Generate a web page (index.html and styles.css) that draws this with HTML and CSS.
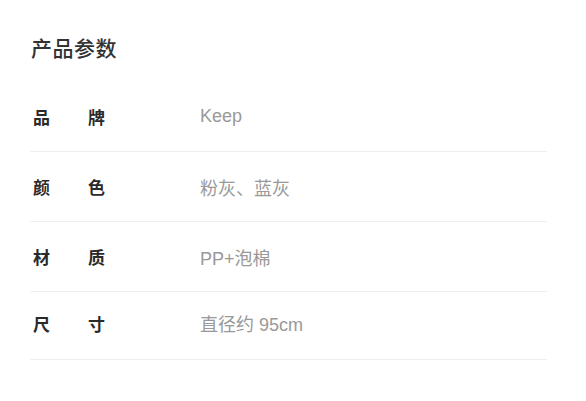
FILE: index.html
```html
<!DOCTYPE html>
<html lang="zh-CN">
<head>
    <meta charset="UTF-8">
    <meta name="viewport" content="width=device-width, initial-scale=1.0">
    <title>产品参数</title>
    <link rel="stylesheet" href="styles.css">
</head>
<body>
    <div class="container">
        <h1>产品参数</h1>
        <div class="param-list">
            <div class="param-row">
                <div class="param-label"><span>品</span><span>牌</span></div>
                <div class="param-value">Keep</div>
            </div>
            <div class="param-row">
                <div class="param-label"><span>颜</span><span>色</span></div>
                <div class="param-value">粉灰、蓝灰</div>
            </div>
            <div class="param-row">
                <div class="param-label"><span>材</span><span>质</span></div>
                <div class="param-value">PP+泡棉</div>
            </div>
            <div class="param-row last">
                <div class="param-label"><span>尺</span><span>寸</span></div>
                <div class="param-value">直径约 95cm</div>
            </div>
        </div>
    </div>
</body>
</html>
```

FILE: styles.css
```css
body {
    font-family: 'Liberation Sans', 'Noto Sans CJK SC', sans-serif;
    margin: 0;
    background-color: #fff;
}
.container {
    padding: 36px 39px 0 30px;
}
h1 {
    margin: 0 0 0 1px;
    font-size: 21px;
    font-weight: 500;
    line-height: 26px;
    color: #333;
    letter-spacing: 0.5px;
}
.param-list {
    margin-top: 20px;
}
.param-row {
    display: flex;
    align-items: center;
    height: 69px;
    border-bottom: 1px solid #efefef;
}
.param-row.last {
    height: 62px;
    padding-bottom: 5px;
}
.param-label {
    display: flex;
    gap: 38px;
    width: 167px;
    padding-left: 3px;
    font-size: 17px;
    font-weight: 700;
    color: #2a2a2a;
}
.param-value {
    font-size: 18px;
    color: #999;
}
```
